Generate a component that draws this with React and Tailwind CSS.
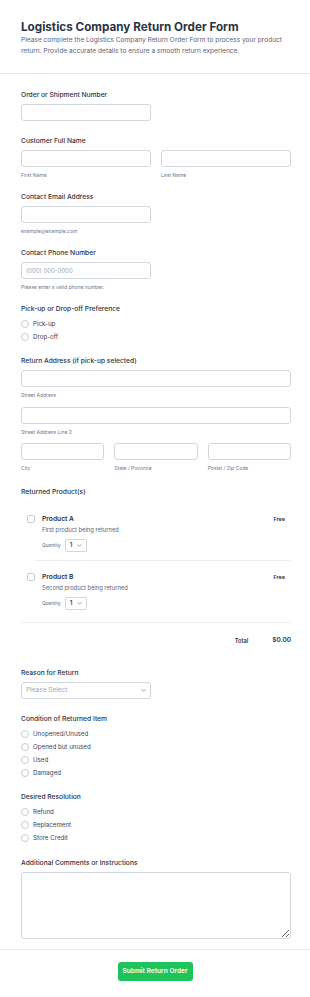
import React from 'react';

const font = { fontFamily: 'Inter, "Noto Sans", sans-serif' };

function Label({ children }) {
  return (
    <div className="h-[10px] text-[6.7px] leading-[10px] font-medium text-[#2c3345] mb-[4px] whitespace-nowrap">
      {children}
    </div>
  );
}

function Sub({ children }) {
  return <div className="mt-[4px] h-[8px] text-[5px] leading-[8px] text-[#6f7a90] whitespace-nowrap">{children}</div>;
}

function Input({ className = '', placeholder }) {
  return (
    <div
      className={`h-[17px] rounded-[3px] border border-[#d3d6de] bg-white flex items-center px-[4px] text-[6px] text-[#a0a7b6] ${className}`}
    >
      {placeholder}
    </div>
  );
}

function Chevron({ className = '' }) {
  return (
    <svg viewBox="0 0 10 6" className={className} fill="none" stroke="#5f6677" strokeWidth="1.4" strokeLinecap="round" strokeLinejoin="round">
      <path d="M2 1.5l3 3 3-3" />
    </svg>
  );
}

function Radios({ options }) {
  return (
    <div className="flex flex-col mt-[-1px]">
      {options.map((o) => (
        <div key={o} className="h-[13px] flex items-center gap-[4px]">
          <span className="w-[8px] h-[8px] rounded-full border border-[#c8ccd5] bg-white shrink-0" />
          <span className="text-[6.2px] text-[#3c4356]">{o}</span>
        </div>
      ))}
    </div>
  );
}

function Product({ name, desc, pb }) {
  return (
    <div className={`flex items-start pl-[6px] pt-[12px] ${pb}`}>
      <span className="w-[8px] h-[8px] rounded-[2px] border border-[#c8ccd5] bg-white shrink-0" />
      <div className="ml-[7px] flex-1">
        <div className="flex justify-between items-center h-[9px]">
          <span className="text-[6.7px] font-semibold text-[#2c3345]">{name}</span>
          <span className="text-[5.4px] font-semibold text-[#2c3345] mr-[6px]">Free</span>
        </div>
        <div className="mt-[1px] text-[5.8px] leading-[10px] text-[#57647e]">{desc}</div>
        <div className="mt-[4px] flex items-center gap-[4px]">
          <span className="text-[4.7px] text-[#57647e]">Quantity</span>
          <div className="w-[22px] h-[13px] rounded-[2px] border border-[#d3d6de] flex items-center justify-between px-[4px]">
            <span className="text-[6.5px] font-medium text-[#2c3345]">1</span>
            <Chevron className="w-[5px] h-[3px]" />
          </div>
        </div>
      </div>
    </div>
  );
}

export default function App() {
  return (
    <div className="w-[310px] bg-white" style={font}>
      <div className="pl-[21px] pr-[19px] pt-[20px] pb-[16px]">
        <h1 className="text-[11.7px] leading-[15px] font-bold text-[#2c3345] whitespace-nowrap">
          Logistics Company Return Order Form
        </h1>
        <p className="text-[6.6px] leading-[11px] text-[#57647e]">
          Please complete the Logistics Company Return Order Form to process your product return. Provide accurate details to ensure a smooth return experience.
        </p>
      </div>
      <div className="h-px bg-[#e6e8ec]" />

      <div className="pl-[21px] pr-[19px] pt-[16px]">
        <div>
          <Label>Order or Shipment Number</Label>
          <Input className="w-[130px]" />
        </div>

        <div className="mt-[15px]">
          <Label>Customer Full Name</Label>
          <div className="grid grid-cols-2 gap-[10px]">
            <div>
              <Input />
              <Sub>First Name</Sub>
            </div>
            <div>
              <Input />
              <Sub>Last Name</Sub>
            </div>
          </div>
        </div>

        <div className="mt-[13px]">
          <Label>Contact Email Address</Label>
          <Input className="w-[130px]" />
          <Sub>example@example.com</Sub>
        </div>

        <div className="mt-[13px]">
          <Label>Contact Phone Number</Label>
          <Input className="w-[130px]" placeholder="(000) 000-0000" />
          <Sub>Please enter a valid phone number.</Sub>
        </div>

        <div className="mt-[13px]">
          <Label>Pick-up or Drop-off Preference</Label>
          <Radios options={['Pick-up', 'Drop-off']} />
        </div>

        <div className="mt-[13px]">
          <Label>Return Address (if pick-up selected)</Label>
          <Input />
          <Sub>Street Address</Sub>
          <Input className="mt-[8px]" />
          <Sub>Street Address Line 2</Sub>
          <div className="mt-[7px] grid grid-cols-3 gap-[10px]">
            <div>
              <Input />
              <Sub>City</Sub>
            </div>
            <div>
              <Input />
              <Sub>State / Province</Sub>
            </div>
            <div>
              <Input />
              <Sub>Postal / Zip Code</Sub>
            </div>
          </div>
        </div>

        <div className="mt-[15px]">
          <Label>Returned Product(s)</Label>
          <div className="mt-[6px]">
            <Product name="Product A" desc="First product being returned" pb="pb-[8px]" />
            <div className="ml-[14px] h-px bg-[#eceef1]" />
            <Product name="Product B" desc="Second product being returned" pb="pb-[12px]" />
            <div className="h-px bg-[#eceef1]" />
            <div className="flex justify-end items-center h-[36px] font-semibold text-[#2c3345]">
              <span className="mr-[24px] text-[5.6px]">Total</span>
              <span className="text-[6.5px]">$0.00</span>
            </div>
          </div>
        </div>

        <div className="mt-[9px]">
          <Label>Reason for Return</Label>
          <div className="w-[130px] h-[17px] rounded-[3px] border border-[#d3d6de] flex items-center justify-between px-[4px]">
            <span className="text-[6.5px] text-[#a0a7b6]">Please Select</span>
            <Chevron className="w-[5px] h-[3px]" />
          </div>
        </div>

        <div className="mt-[15px]">
          <Label>Condition of Returned Item</Label>
          <Radios options={['Unopened/Unused', 'Opened but unused', 'Used', 'Damaged']} />
        </div>

        <div className="mt-[13px]">
          <Label>Desired Resolution</Label>
          <Radios options={['Refund', 'Replacement', 'Store Credit']} />
        </div>

        <div className="mt-[14px] pb-[10px]">
          <Label>Additional Comments or Instructions</Label>
          <textarea className="block w-full h-[67px] rounded-[3px] border border-[#d3d6de] bg-white resize-y outline-none" />
        </div>
      </div>

      <div className="h-px bg-[#e6e8ec]" />
      <div className="flex justify-center pt-[12px] pb-[17px]">
        <button className="w-[75px] h-[19px] rounded-[3px] bg-[#1fc35c] text-white text-[6.6px] font-semibold">
          Submit Return Order
        </button>
      </div>
    </div>
  );
}
